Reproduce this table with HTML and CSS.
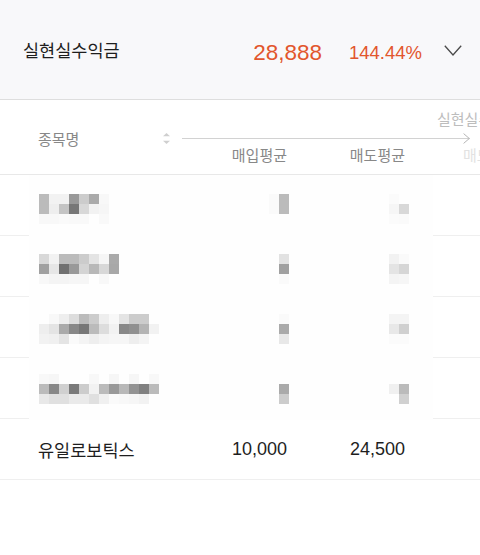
FILE: index.html
```html
<!DOCTYPE html>
<html lang="ko">
<head>
<meta charset="utf-8">
<title>실현실수익금</title>
<link rel="stylesheet" href="styles.css">
</head>
<body>
<div class="summary">
  <span class="summary-title">실현실수익금</span>
  <span class="summary-amount">28,888</span>
  <span class="summary-rate">144.44%</span>
  <svg class="chevron" width="18" height="11" viewBox="0 0 18 11"><polyline points="0.8,0.8 9,10 17.2,0.8" fill="none" stroke="#4a4a4a" stroke-width="1.3"/></svg>
</div>
<div class="table">
  <div class="thead">
    <div class="th-name">
      <span>종목명</span>
      <svg class="sort" width="7" height="11" viewBox="0 0 7 11"><polygon points="3.5,0 7,3.2 0,3.2" fill="#cfcfcf"/><polygon points="0,7.8 7,7.8 3.5,11" fill="#cfcfcf"/></svg>
    </div>
    <div class="th-scroll">
      <div class="th-group">실현실수익금</div>
      <div class="axis">
        <div class="axis-line"></div>
        <svg class="axis-arrow" width="7" height="11" viewBox="0 0 7 11"><polyline points="0.6,0.6 6.3,5.5 0.6,10.4" fill="none" stroke="#b5b5b5" stroke-width="1"/></svg>
      </div>
      <div class="th-cols">
        <span class="col-a">매입평균</span>
        <span class="col-b">매도평균</span>
        <span class="col-c">매도수량</span>
      </div>
    </div>
  </div>
  <div class="tbody">
    <div class="row"><span class="cell-name"></span><span class="cell-a"></span><span class="cell-b"></span></div>
    <div class="row"><span class="cell-name"></span><span class="cell-a"></span><span class="cell-b"></span></div>
    <div class="row"><span class="cell-name"></span><span class="cell-a"></span><span class="cell-b"></span></div>
    <div class="row"><span class="cell-name"></span><span class="cell-a"></span><span class="cell-b"></span></div>
    <div class="row"><span class="cell-name">유일로보틱스</span><span class="cell-a">10,000</span><span class="cell-b">24,500</span></div>
    <div class="mosaic"></div>
  </div>
</div>
</body>
</html>
```
FILE: styles.css
```css
html, body {
  margin: 0;
  padding: 0;
  background: #fff;
}
body {
  width: 480px;
  height: 555px;
  overflow: hidden;
  font-family: "Liberation Sans", "Noto Sans CJK KR", sans-serif;
  color: #222;
}
.summary {
  height: 99px;
  border-bottom: 1px solid #dedede;
  background: #f8f8fa;
  display: flex;
  align-items: center;
  padding: 0 18px 0 23px;
}
.summary-title {
  font-size: 17.5px;
  line-height: 20px;
  color: #1e1e1e;
  margin-top: 3px;
}
.summary-amount {
  margin-left: auto;
  font-size: 22.5px;
  line-height: 24px;
  color: #e2562d;
  margin-top: 7px;
}
.summary-rate {
  margin-left: 27px;
  font-size: 18.5px;
  line-height: 20px;
  color: #e2562d;
  margin-top: 7px;
}
.chevron {
  margin-left: 22px;
  margin-top: 1px;
  display: block;
}
.thead {
  height: 74px;
  border-bottom: 1px solid #e8e8e8;
  display: flex;
}
.th-name {
  width: 182px;
  box-sizing: border-box;
  padding: 0 12px 0 38px;
  display: flex;
  align-items: center;
  justify-content: space-between;
  font-size: 15px;
  color: #888;
  padding-top: 2px;
}
.sort {
  display: block;
}
.th-scroll {
  flex: 1;
  overflow: hidden;
  padding-top: 10px;
  white-space: nowrap;
}
.th-group {
  height: 20px;
  line-height: 20px;
  padding-left: 255px;
  font-size: 15px;
  color: #bdbdbd;
}
.axis {
  height: 16px;
  display: flex;
  align-items: center;
  margin-right: 10px;
}
.axis-line {
  flex: 1;
  height: 1px;
  background: #d2d2d2;
}
.axis-arrow {
  display: block;
  margin-left: -7px;
}
.th-cols {
  display: flex;
  height: 20px;
  line-height: 20px;
  font-size: 15px;
  color: #888;
}
.col-a {
  width: 105px;
  text-align: right;
  flex: none;
}
.col-b {
  width: 118px;
  text-align: right;
  flex: none;
}
.col-c {
  padding-left: 58px;
  color: #e2e2e2;
  flex: none;
}
.tbody {
  position: relative;
}
.row {
  height: 60px;
  border-bottom: 1px solid #efefef;
  display: flex;
  align-items: center;
}
.cell-name {
  width: 182px;
  box-sizing: border-box;
  padding-left: 38px;
  font-size: 17.5px;
  color: #1e1e1e;
}
.cell-a {
  width: 105px;
  text-align: right;
  font-size: 18px;
  color: #1e1e1e;
}
.cell-b {
  width: 118px;
  text-align: right;
  font-size: 18px;
  color: #1e1e1e;
}
.mosaic {
  position: absolute;
  left: 29px;
  top: 0;
  width: 404px;
  height: 245px;
  background: #fefefe;
}
.mosaic::before {
  content: "";
  position: absolute;
  left: 0;
  top: 9px;
  width: 10px;
  height: 10px;
  box-shadow:
    10px 10px 0 #bbb, 20px 10px 0 #f2f2f2, 30px 10px 0 #f2f2f2, 40px 10px 0 #999, 50px 10px 0 #ccc, 60px 10px 0 #aaa, 70px 10px 0 #f8f8f8,
    10px 20px 0 #bbb, 20px 20px 0 #eee, 30px 20px 0 #c4c4c4, 40px 20px 0 #777, 50px 20px 0 #d8d8d8, 60px 20px 0 #f2f2f2, 70px 20px 0 #f6f6f6,
    10px 30px 0 #f8f8f8, 20px 30px 0 #f8f8f8, 30px 30px 0 #fafafa, 40px 30px 0 #f9f9f9, 50px 30px 0 #f9f9f9, 70px 30px 0 #f9f9f9,
    240px 10px 0 #fafafa, 250px 10px 0 #bbb, 240px 20px 0 #fafafa, 250px 20px 0 #bbb,
    360px 10px 0 #fbfbfb, 360px 20px 0 #f6f6f6, 370px 20px 0 #d8d8d8, 360px 30px 0 #fbfbfb, 370px 30px 0 #fafafa,
    10px 70px 0 #d8d8d8, 20px 70px 0 #f2f2f2, 30px 70px 0 #bbb, 40px 70px 0 #bbb, 50px 70px 0 #ccc, 60px 70px 0 #e4e4e4, 70px 70px 0 #f6f6f6, 80px 70px 0 #aaa,
    10px 80px 0 #a0a0a0, 20px 80px 0 #e6e6e6, 30px 80px 0 #707070, 40px 80px 0 #999, 50px 80px 0 #d4d4d4, 60px 80px 0 #b8b8b8, 70px 80px 0 #d8d8d8, 80px 80px 0 #a8a8a8,
    10px 90px 0 #f8f8f8, 20px 90px 0 #f4f4f4, 30px 90px 0 #f4f4f4, 40px 90px 0 #f6f6f6, 50px 90px 0 #f6f6f6, 70px 90px 0 #f8f8f8,
    250px 70px 0 #e2e2e2, 250px 80px 0 #a0a0a0, 250px 90px 0 #fafafa,
    360px 70px 0 #f2f2f2, 370px 70px 0 #fafafa, 360px 80px 0 #e4e4e4, 370px 80px 0 #d6d6d6, 360px 90px 0 #f4f4f4, 370px 90px 0 #f6f6f6,
    20px 130px 0 #f8f8f8, 30px 130px 0 #eee, 40px 130px 0 #ddd, 50px 130px 0 #bbb, 60px 130px 0 #ccc, 70px 130px 0 #eee, 80px 130px 0 #f8f8f8, 90px 130px 0 #e4e4e4, 100px 130px 0 #ccc, 110px 130px 0 #ccc,
    10px 140px 0 #eee, 20px 140px 0 #e4e4e4, 30px 140px 0 #aaa, 40px 140px 0 #888, 50px 140px 0 #777, 60px 140px 0 #bbb, 70px 140px 0 #ddd, 80px 140px 0 #f2f2f2, 90px 140px 0 #888, 100px 140px 0 #909090, 110px 140px 0 #b4b4b4, 120px 140px 0 #f2f2f2,
    10px 150px 0 #f2f2f2, 20px 150px 0 #f0f0f0, 30px 150px 0 #e4e4e4, 40px 150px 0 #fafafa, 50px 150px 0 #f4f4f4, 60px 150px 0 #eee, 70px 150px 0 #f4f4f4, 80px 150px 0 #f6f6f6, 90px 150px 0 #f6f6f6, 100px 150px 0 #eee, 110px 150px 0 #f4f4f4,
    250px 130px 0 #fafafa, 250px 140px 0 #aaa, 250px 150px 0 #e8e8e8,
    360px 130px 0 #f4f4f4, 370px 130px 0 #f4f4f4, 360px 140px 0 #e8e8e8, 370px 140px 0 #d0d0d0, 360px 150px 0 #fbfbfb, 370px 150px 0 #fbfbfb,
    10px 190px 0 #f8f8f8, 20px 190px 0 #f6f6f6, 60px 190px 0 #f8f8f8, 80px 190px 0 #f6f6f6, 100px 190px 0 #f6f6f6, 120px 190px 0 #f8f8f8,
    10px 200px 0 #bbb, 20px 200px 0 #888, 30px 200px 0 #d0d0d0, 40px 200px 0 #7a7a7a, 50px 200px 0 #ccc, 60px 200px 0 #f2f2f2, 70px 200px 0 #bbb, 80px 200px 0 #999, 90px 200px 0 #b8b8b8, 100px 200px 0 #939393, 110px 200px 0 #808080, 120px 200px 0 #bbb,
    10px 210px 0 #e8e8e8, 20px 210px 0 #e0e0e0, 30px 210px 0 #e0e0e0, 40px 210px 0 #eaeaea, 50px 210px 0 #eaeaea, 60px 210px 0 #e0e0e0, 70px 210px 0 #f0f0f0, 80px 210px 0 #fafafa, 90px 210px 0 #f8f8f8, 100px 210px 0 #f6f6f6, 110px 210px 0 #f2f2f2,
    250px 200px 0 #aaa, 250px 210px 0 #ccc,
    360px 200px 0 #f0f0f0, 370px 200px 0 #bbb, 370px 210px 0 #d0d0d0;
}
```
